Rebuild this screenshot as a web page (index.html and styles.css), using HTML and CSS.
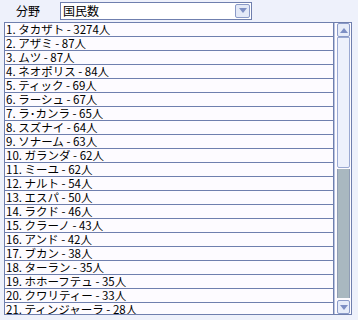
FILE: index.html
```html
<!DOCTYPE html>
<html lang="ja">

<head>
    <meta charset="UTF-8">
    <meta name="viewport" content="width=device-width, initial-scale=1.0">
    <title>分野</title>
    <link rel="stylesheet" href="styles.css">
</head>

<body>
    <div class="toolbar">
        <span class="label">分野</span>
        <div class="select">
            <span class="select-text">国民数</span>
            <span class="drop-btn">
                <svg width="8" height="5" viewBox="0 0 8 5"><path d="M0 0H8L4 5Z" fill="#7d8fc4"/></svg>
            </span>
        </div>
    </div>

    <div class="listbox">
        <ul class="rows">
            <li>1. タカザト - 3274人</li>
            <li>2. アザミ - 87人</li>
            <li>3. ムツ - 87人</li>
            <li>4. ネオポリス - 84人</li>
            <li>5. ティック - 69人</li>
            <li>6. ラーシュ - 67人</li>
            <li>7. ラ･カンラ - 65人</li>
            <li>8. スズナイ - 64人</li>
            <li>9. ソナーム - 63人</li>
            <li>10. ガランダ - 62人</li>
            <li>11. ミーユ - 62人</li>
            <li>12. ナルト - 54人</li>
            <li>13. エスパ - 50人</li>
            <li>14. ラクド - 46人</li>
            <li>15. クラーノ - 43人</li>
            <li>16. アンド - 42人</li>
            <li>17. ブカン - 38人</li>
            <li>18. ターラン - 35人</li>
            <li>19. ホホーフテュ - 35人</li>
            <li>20. クワリティー - 33人</li>
            <li>21. ティンジャーラ - 28人</li>
        </ul>
        <div class="scrollbar">
            <div class="sb-btn">
                <svg width="8" height="5" viewBox="0 0 8 5"><path d="M0 5H8L4 0Z" fill="#7d8fc4"/></svg>
            </div>
            <div class="sb-thumb"></div>
            <div class="sb-track"></div>
            <div class="sb-btn">
                <svg width="8" height="5" viewBox="0 0 8 5"><path d="M0 0H8L4 5Z" fill="#7d8fc4"/></svg>
            </div>
        </div>
    </div>
</body>

</html>
```

FILE: styles.css
```css
body {
    margin: 0;
    background-color: #eef1fb;
    font-family: 'Noto Sans CJK JP', sans-serif;
    font-size: 12px;
    color: #000;
    height: 320px;
    overflow: hidden;
}

.toolbar {
    display: flex;
    align-items: center;
    height: 19px;
    padding-top: 1px;
    padding-bottom: 2px;
}

.label {
    margin-left: 16px;
    width: 44px;
    line-height: 14px;
}

.select {
    display: flex;
    align-items: center;
    justify-content: space-between;
    box-sizing: border-box;
    width: 192px;
    height: 18px;
    border: 1px solid #6f7fae;
    background-color: #fff;
}

.select-text {
    padding-left: 2px;
    line-height: 14px;
}

.drop-btn {
    display: flex;
    align-items: center;
    justify-content: center;
    width: 13px;
    height: 12px;
    margin-right: 1px;
    border: 1px solid #8a9ac8;
    border-radius: 2px;
    background-color: #e3e9f7;
}

.listbox {
    display: flex;
    box-sizing: border-box;
    width: 348px;
    height: 293px;
    margin-left: 4px;
    border: 1px solid #6f7fae;
    background-color: #fdfbff;
    overflow: hidden;
}

.rows {
    flex: 1;
    margin: 0;
    padding: 0;
    list-style-type: none;
    border-right: 1px solid #6f7fae;
}

.rows li {
    height: 13px;
    line-height: 12px;
    padding-left: 1px;
    font-size: 11.5px;
    border-bottom: 1px solid #6f7fae;
    white-space: nowrap;
}

.scrollbar {
    display: flex;
    flex-direction: column;
    width: 17px;
    padding: 0 1px 0 2px;
    box-sizing: border-box;
    border-left: 1px solid #b8c3e0;
}

.sb-btn {
    display: flex;
    align-items: center;
    justify-content: center;
    height: 12px;
    border: 1px solid #8a9ac8;
    border-radius: 2px;
    background-color: #e6ecf9;
}

.sb-thumb {
    height: 129px;
    border: 1px solid #9aa9d2;
    border-radius: 0 0 2px 2px;
    background-color: #edf1fc;
}

.sb-track {
    flex: 1;
    margin: 1px 0 2px;
    border-left: 1px solid #8f9cb4;
    border-right: 1px solid #8f9cb4;
    background-color: #a9b8c0;
}
```
